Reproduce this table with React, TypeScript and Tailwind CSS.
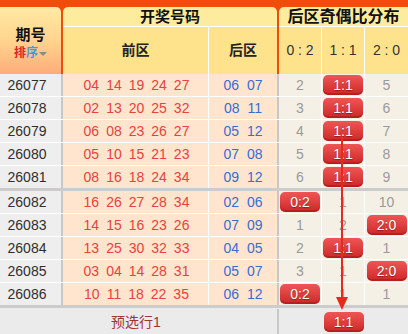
import React from "react";

type Row = {
  id: string;
  front: string[];
  back: string[];
  cells: string[]; // 0:2, 1:1, 2:0 columns
  hit: number; // which column holds the badge
  groupEnd?: boolean;
};

const ROWS: Row[] = [
  { id: "26077", front: ["04", "14", "19", "24", "27"], back: ["06", "07"], cells: ["2", "1:1", "5"], hit: 1 },
  { id: "26078", front: ["02", "13", "20", "25", "32"], back: ["08", "11"], cells: ["3", "1:1", "6"], hit: 1 },
  { id: "26079", front: ["06", "08", "23", "26", "27"], back: ["05", "12"], cells: ["4", "1:1", "7"], hit: 1 },
  { id: "26080", front: ["05", "10", "15", "21", "23"], back: ["07", "08"], cells: ["5", "1:1", "8"], hit: 1 },
  { id: "26081", front: ["08", "16", "18", "24", "34"], back: ["09", "12"], cells: ["6", "1:1", "9"], hit: 1, groupEnd: true },
  { id: "26082", front: ["16", "26", "27", "28", "34"], back: ["02", "06"], cells: ["0:2", "1", "10"], hit: 0 },
  { id: "26083", front: ["14", "15", "16", "23", "26"], back: ["07", "09"], cells: ["1", "2", "2:0"], hit: 2 },
  { id: "26084", front: ["13", "25", "30", "32", "33"], back: ["04", "05"], cells: ["2", "1:1", "1"], hit: 1 },
  { id: "26085", front: ["03", "04", "14", "28", "31"], back: ["05", "07"], cells: ["3", "1", "2:0"], hit: 2 },
  { id: "26086", front: ["10", "11", "18", "22", "35"], back: ["06", "12"], cells: ["0:2", "1", "1"], hit: 0, groupEnd: true },
];

function Badge({ text }: { text: string }) {
  return (
    <div className="flex h-[20px] w-[40px] items-center justify-center rounded-[5px] bg-linear-to-b from-[#ef5555] to-[#cc2626] text-[14px] text-white shadow-[inset_0_-2px_0_rgba(120,0,0,0.25)] [text-shadow:0_1px_1px_rgba(100,0,0,0.5)]">
      {text}
    </div>
  );
}

function DataRow({ row }: { row: Row }) {
  return (
    <div className={`flex border-b ${row.groupEnd ? "border-b-[3px] border-[#cccccc]" : "border-white"}`}>
      <div className="flex h-[22px] w-[63px] items-center justify-center border-r-2 border-[#c8c8c8] bg-[#eeeeee] pr-[7px] text-[14px] text-[#2e2e2e]">
        {row.id}
      </div>
      <div className="flex h-[22px] w-[146px] items-center justify-center gap-[7px] border-r border-white bg-[#ffe5cd] pl-[2px] text-[14px] text-[#e8423e]">
        {row.front.map((n, i) => (
          <span key={i}>{n}</span>
        ))}
      </div>
      <div className="flex h-[22px] w-[70px] items-center justify-center gap-[8px] border-r-2 border-[#c8c8c8] bg-[#ffe5cd] text-[14px] text-[#3a6bd4]">
        {row.back.map((n, i) => (
          <span key={i}>{n}</span>
        ))}
      </div>
      {row.cells.map((c, i) => (
        <div
          key={i}
          className={`flex h-[22px] w-[43px] items-center justify-center bg-[#f5f0e5] text-[14px] text-[#9a9a9a] ${i < 2 ? "border-r border-white" : ""}`}
        >
          {i === row.hit ? <Badge text={c} /> : c}
        </div>
      ))}
    </div>
  );
}

export default function App() {
  return (
    <div className="relative h-[334px] w-[408px] overflow-hidden bg-[#ebebeb] font-['Liberation_Sans','Noto_Sans_CJK_SC',sans-serif]">
      {/* header */}
      <div className="flex gap-[2px] bg-[#f04c0c] pt-[7px]">
        <div className="flex h-[67px] w-[61px] flex-col items-center justify-center rounded-tr-[5px] bg-linear-to-b from-[#ffeaa4] via-[#ffd48e] to-[#ffac7a] pt-[5px]">
          <div className="text-[15px] font-bold leading-[18px] text-[#111111]">期号</div>
          <div className="mt-[2px] flex items-center text-[12px] font-bold leading-[14px]">
            <span className="text-[#e02424]">排</span>
            <span className="text-[#3b9be8]">序</span>
            <span className="ml-[1px] mt-[1px] h-0 w-0 border-x-[4px] border-t-[4px] border-x-transparent border-t-[#8a8a8a]" />
          </div>
        </div>

        <div className="flex h-[67px] w-[214px] flex-col overflow-hidden rounded-t-[5px]">
          <div className="flex h-[20px] items-center justify-center border-b border-white bg-[#feec9e] pt-[1px] text-[15px] font-bold text-[#111111]">
            开奖号码
          </div>
          <div className="flex flex-1 bg-[#ffe28c] text-[14px] font-bold text-[#222222]">
            <div className="flex w-[146px] items-center justify-center border-r border-white">前区</div>
            <div className="flex w-[68px] items-center justify-center">后区</div>
          </div>
        </div>

        <div className="flex h-[67px] w-[129px] flex-col overflow-hidden rounded-tl-[5px]">
          <div className="flex h-[20px] items-center justify-center border-b border-white bg-[#feec9e] pt-[1px] text-[16px] font-bold text-[#111111]">
            后区奇偶比分布
          </div>
          <div className="flex flex-1 bg-[#ffe28c] text-[14px] text-[#333333]">
            <div className="flex w-[43px] items-center justify-center border-r border-white">0 : 2</div>
            <div className="flex w-[43px] items-center justify-center border-r border-white">1 : 1</div>
            <div className="flex w-[43px] items-center justify-center">2 : 0</div>
          </div>
        </div>
      </div>

      {/* body */}
      {ROWS.map((r) => (
        <DataRow key={r.id} row={r} />
      ))}

      {/* footer / prediction row */}
      <div className="flex h-[27px] bg-[#ebebeb] pt-[1px]">
        <div className="w-[63px]" />
        <div className="flex w-[146px] items-center justify-center text-[14px] text-[#a33434]">预选行1</div>
        <div className="w-[70px] border-r-2 border-[#c8c8c8]" />
        <div className="w-[43px]" />
        <div className="flex w-[43px] items-center justify-center">
          <Badge text="1:1" />
        </div>
        <div className="w-[43px]" />
      </div>

      {/* drawn arrow */}
      <svg className="pointer-events-none absolute left-0 top-0" width="408" height="334">
        <line x1="342" y1="137" x2="342" y2="300" stroke="#e82a1e" strokeWidth="2" />
        <polygon points="336,297 348,297 342,310" fill="#e82a1e" />
      </svg>
    </div>
  );
}
